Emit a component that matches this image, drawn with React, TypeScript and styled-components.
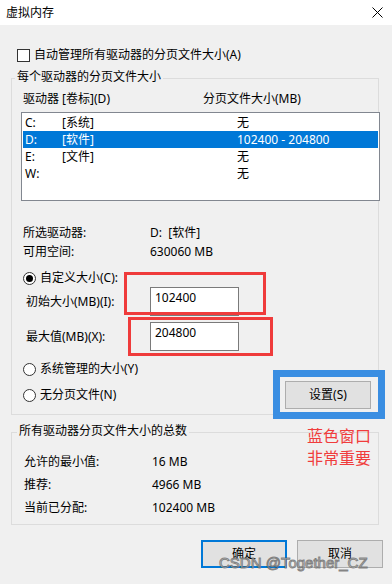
import styled, { createGlobalStyle } from "styled-components";

const GlobalStyle = createGlobalStyle`
  html, body {
    margin: 0;
    padding: 0;
    background: #f0f0f0;
  }
  * {
    box-sizing: border-box;
  }
`;

const drives = [
  { drive: "C:", label: "[系统]", size: "无" },
  { drive: "D:", label: "[软件]", size: "102400 - 204800", selected: true },
  { drive: "E:", label: "[文件]", size: "无" },
  { drive: "W:", label: "", size: "无" },
];

const totals = [
  { label: "允许的最小值:", value: "16 MB" },
  { label: "推荐:", value: "4966 MB" },
  { label: "当前已分配:", value: "102400 MB" },
];

const App = () => {
  return (
    <Window>
      <GlobalStyle />
      <TitleBar>
        <span>虚拟内存</span>
        <CloseIcon width="11" height="11" viewBox="0 0 11 11">
          <path d="M0.5 0.5 L10.5 10.5 M10.5 0.5 L0.5 10.5" stroke="#000" strokeWidth="1" />
        </CloseIcon>
      </TitleBar>

      <Body>
        <CheckRow>
          <CheckBox />
          <span>自动管理所有驱动器的分页文件大小(A)</span>
        </CheckRow>

        <Group $mt={15}>
          <Legend $ml={3}>每个驱动器的分页文件大小</Legend>
          <HeaderRow>
            <span>驱动器 [卷标](D)</span>
            <span>分页文件大小(MB)</span>
          </HeaderRow>
          <ListBox>
            {drives.map((d) => (
              <ListRow key={d.drive} $selected={!!d.selected}>
                <span>{d.drive}</span>
                <span>{d.label}</span>
                <span>{d.size}</span>
              </ListRow>
            ))}
          </ListBox>

          <InfoBlock>
            <InfoRow>
              <InfoLabel>所选驱动器:</InfoLabel>
              <span>D:&nbsp;&nbsp;[软件]</span>
            </InfoRow>
            <InfoRow>
              <InfoLabel>可用空间:</InfoLabel>
              <span>630060 MB</span>
            </InfoRow>
          </InfoBlock>

          <RadioRow $mt={9}>
            <Radio $checked />
            <span>自定义大小(C):</span>
          </RadioRow>
          <FieldRow $mt={1}>
            <FieldLabel>初始大小(MB)(I):</FieldLabel>
            <TextBox>102400</TextBox>
          </FieldRow>
          <FieldRow $mt={6}>
            <FieldLabel>最大值(MB)(X):</FieldLabel>
            <TextBox>204800</TextBox>
          </FieldRow>
          <RadioRow $mt={10}>
            <Radio />
            <span>系统管理的大小(Y)</span>
          </RadioRow>
          <BottomRow>
            <RadioRow $mt={0}>
              <Radio />
              <span>无分页文件(N)</span>
            </RadioRow>
            <Highlighted>
              <Button $w={86}>设置(S)</Button>
            </Highlighted>
          </BottomRow>

          <RedMark $left={112} $top={193} $w={142} $h={43} />
          <RedMark $left={116} $top={238} $w={145} $h={39} />
        </Group>

        <Group $mt={17}>
          <Legend $ml={5}>所有驱动器分页文件大小的总数</Legend>
          <TotalsList>
            {totals.map((t) => (
              <TotalRow key={t.label}>
                <TotalLabel>{t.label}</TotalLabel>
                <span>{t.value}</span>
              </TotalRow>
            ))}
          </TotalsList>
          <Note>
            蓝色窗口
            <br />
            非常重要
          </Note>
        </Group>

        <Footer>
          <Button $w={86} $primary>
            确定
          </Button>
          <Button $w={86}>取消</Button>
        </Footer>
      </Body>

      <Watermark>CSDN @Together_CZ</Watermark>
    </Window>
  );
};

export default App;

const Window = styled.div`
  position: relative;
  width: 392px;
  height: 584px;
  overflow: hidden;
  background: #f0f0f0;
  color: #000;
  font-family: "Noto Sans", "Noto Sans CJK SC", sans-serif;
  font-size: 12px;
  line-height: 16px;
`;

const TitleBar = styled.div`
  height: 25px;
  background: #fff;
  display: flex;
  align-items: center;
  justify-content: space-between;
  padding: 0 9px 0 6px;
`;

const CloseIcon = styled.svg`
  display: block;
`;

const Body = styled.div`
  padding: 0 13px 0 11px;
`;

const CheckRow = styled.div`
  display: flex;
  align-items: center;
  gap: 4px;
  height: 16px;
  margin: 22px 0 0 6px;
`;

const CheckBox = styled.span`
  width: 13px;
  height: 13px;
  border: 1px solid #333;
  background: #fff;
`;

const Group = styled.div<{ $mt: number }>`
  position: relative;
  margin-top: ${({ $mt }) => $mt}px;
  border: 1px solid #dcdcdc;
  padding-bottom: 5px;
`;

const Legend = styled.div<{ $ml: number }>`
  width: fit-content;
  margin: -10px 0 0 ${({ $ml }) => $ml}px;
  padding: 0 2px;
  background: #f0f0f0;
  line-height: 16px;
`;

const HeaderRow = styled.div`
  display: grid;
  grid-template-columns: 180px 1fr;
  margin-top: 6px;
  padding-left: 11px;
`;

const ListBox = styled.div`
  margin: 5px -2px 0 9px;
  height: 89px;
  border: 1px solid #828790;
  background: #fff;
  padding: 1px;
`;

const ListRow = styled.div<{ $selected: boolean }>`
  display: grid;
  grid-template-columns: 37px 175px 1fr;
  height: 17px;
  line-height: 17px;
  padding-left: 2px;
  background: ${({ $selected }) => ($selected ? "#0078d7" : "transparent")};
  color: ${({ $selected }) => ($selected ? "#fff" : "#000")};
`;

const InfoBlock = styled.div`
  margin-top: 22px;
  padding-left: 11px;
`;

const InfoRow = styled.div`
  display: flex;
  height: 19px;
  align-items: center;
`;

const InfoLabel = styled.span`
  width: 127px;
`;

const RadioRow = styled.div<{ $mt: number }>`
  display: flex;
  align-items: center;
  gap: 4px;
  height: 16px;
  margin-top: ${({ $mt }) => $mt}px;
  padding-left: 11px;
`;

const Radio = styled.span<{ $checked?: boolean }>`
  position: relative;
  width: 13px;
  height: 13px;
  border: 1px solid #333;
  border-radius: 50%;
  background: #fff;
  &::after {
    content: "";
    display: ${({ $checked }) => ($checked ? "block" : "none")};
    position: absolute;
    inset: 2px;
    border-radius: 50%;
    background: #000;
  }
`;

const FieldRow = styled.div<{ $mt: number }>`
  display: flex;
  align-items: center;
  margin-top: ${({ $mt }) => $mt}px;
  padding-left: 14px;
`;

const FieldLabel = styled.span`
  width: 124px;
`;

const TextBox = styled.div`
  width: 89px;
  height: 29px;
  border: 1px solid #7a7a7a;
  background: #fff;
  padding: 2px 4px;
`;

const BottomRow = styled.div`
  display: flex;
  align-items: center;
  justify-content: space-between;
  margin-top: 4px;
  padding-right: 7px;
`;

const Highlighted = styled.div`
  position: relative;
  &::after {
    content: "";
    position: absolute;
    top: -11px;
    bottom: -10px;
    left: -12px;
    right: -14px;
    border: 7px solid #3a8ee2;
    pointer-events: none;
  }
`;

const Button = styled.div<{ $w: number; $primary?: boolean }>`
  width: ${({ $w }) => $w}px;
  height: 28px;
  display: flex;
  align-items: center;
  justify-content: center;
  background: #e1e1e1;
  border: ${({ $primary }) => ($primary ? "2px solid #0078d7" : "1px solid #adadad")};
`;

const RedMark = styled.div<{ $left: number; $top: number; $w: number; $h: number }>`
  position: absolute;
  left: ${({ $left }) => $left}px;
  top: ${({ $top }) => $top}px;
  width: ${({ $w }) => $w}px;
  height: ${({ $h }) => $h}px;
  border: 3px solid #ef3b3b;
  pointer-events: none;
`;

const TotalsList = styled.div`
  margin-top: 11px;
  padding-left: 12px;
`;

const TotalRow = styled.div`
  display: flex;
  align-items: center;
  height: 23px;
`;

const TotalLabel = styled.span`
  width: 128px;
`;

const Note = styled.div`
  position: absolute;
  left: 295px;
  top: -9px;
  color: #f03c3c;
  font-size: 16px;
  line-height: 22px;
  font-family: "Noto Sans CJK SC", sans-serif;
`;

const Footer = styled.div`
  display: flex;
  justify-content: flex-end;
  gap: 10px;
  margin: 15px -4px 0 0;
`;

const Watermark = styled.div`
  position: absolute;
  left: 219px;
  top: 554px;
  font-family: "Liberation Sans", Arial, sans-serif;
  font-size: 15px;
  line-height: 18px;
  color: rgba(235, 235, 235, 0.8);
  -webkit-text-stroke: 1px rgba(85, 85, 85, 0.7);
  pointer-events: none;
`;
